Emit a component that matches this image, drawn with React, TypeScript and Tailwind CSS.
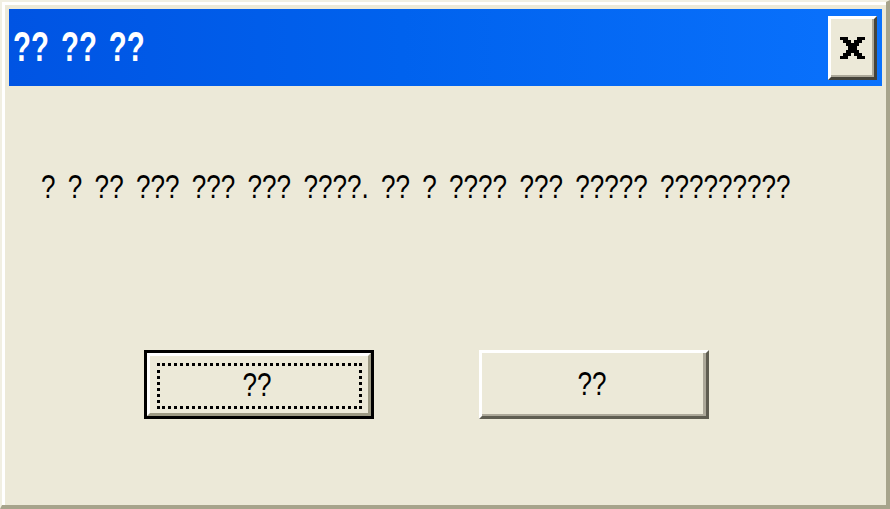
import React from "react";

const XGlyph = () => {
  const rows = [
    "XXX...XXX",
    ".XXX.XXX.",
    "..XXXXX..",
    "...XXX...",
    "..XXXXX..",
    ".XXX.XXX.",
    "XXX...XXX",
  ];
  const rects: React.ReactElement[] = [];
  rows.forEach((r, y) =>
    r.split("").forEach((c, x) => {
      if (c === "X") rects.push(<rect key={`${x}-${y}`} x={x} y={y} width={1} height={1} />);
    })
  );
  return (
    <svg width="25" height="22" viewBox="0 0 9 7" preserveAspectRatio="none" shapeRendering="crispEdges" fill="#000">
      {rects}
    </svg>
  );
};

const Label = ({ text }: { text: string }) => (
  <span
    className="inline-block whitespace-pre text-black text-[34px] leading-[34px] scale-x-[0.767] [word-spacing:6.6px] mt-[-4px]"
    style={{ fontFamily: '"Liberation Sans", Arial, sans-serif' }}
  >
    {text}
  </span>
);

export default function App() {
  return (
    <div className="w-[890px] h-[509px] overflow-hidden bg-[#ece9d8] border-t-2 border-l-2 border-r-4 border-b-4 border-t-[#f1efe2] border-l-[#f1efe2] border-r-[#a7a48c] border-b-[#a7a48c]">
      <div className="h-full overflow-hidden border-t-[3px] border-l-[3px] border-white pt-[4px] pl-[4px] pr-[4px] flex flex-col">
        <div className="h-[77px] shrink-0 flex items-center justify-between pl-[4px] pr-[5px] bg-[linear-gradient(to_right,#0054e3_0%,#0062ee_45%,#0a72fd_100%)]">
          <span
            className="inline-block origin-left whitespace-pre text-white font-bold text-[43px] leading-[43px] scale-x-[0.685] [word-spacing:5.5px] mt-[-2px]"
            style={{ fontFamily: '"Liberation Sans", Arial, sans-serif' }}
          >
            ?? ?? ??
          </span>
          <div className="w-[49px] h-[64px] shrink-0 bg-[#ece9d8] border-t-[3px] border-l-[3px] border-t-white border-l-white border-r-[3px] border-b-[3px] border-r-[#45433a] border-b-[#45433a] shadow-[inset_-2px_-2px_0_#aca899] flex items-center justify-center">
            <XGlyph />
          </div>
        </div>
        <div className="flex-1 flex flex-col">
          <div className="pt-[83px] pl-[32px] h-[34px] box-content overflow-visible">
            <span
              className="inline-block origin-left whitespace-pre text-black text-[34px] leading-[34px] scale-x-[0.767] [word-spacing:6.6px]"
              style={{ fontFamily: '"Liberation Sans", Arial, sans-serif' }}
            >
              ? ? ?? ??? ??? ??? ????. ?? ? ???? ??? ????? ?????????
            </span>
          </div>
          <div className="mt-[147px] pl-[135px] flex gap-[105px]">
            <div className="w-[230px] h-[69px] border-[3px] border-black">
              <div className="h-full border-t-[3px] border-l-[3px] border-t-white border-l-white border-r-[3px] border-b-[3px] border-r-[#9d9a84] border-b-[#9d9a84] pt-[7px] pb-[4px] pl-[7px] pr-[6px] flex">
                <div className="flex-1 border-[3px] border-dotted border-black flex items-center justify-center pr-[6px]">
                  <Label text="??" />
                </div>
              </div>
            </div>
            <div className="w-[230px] h-[69px] border-t-[3px] border-l-[3px] border-t-white border-l-white border-r-[3px] border-b-[3px] border-r-[#5f5d51] border-b-[#5f5d51] shadow-[inset_-3px_-2px_0_#aca899] flex items-center justify-center pr-[5px]">
              <Label text="??" />
            </div>
          </div>
        </div>
      </div>
    </div>
  );
}
